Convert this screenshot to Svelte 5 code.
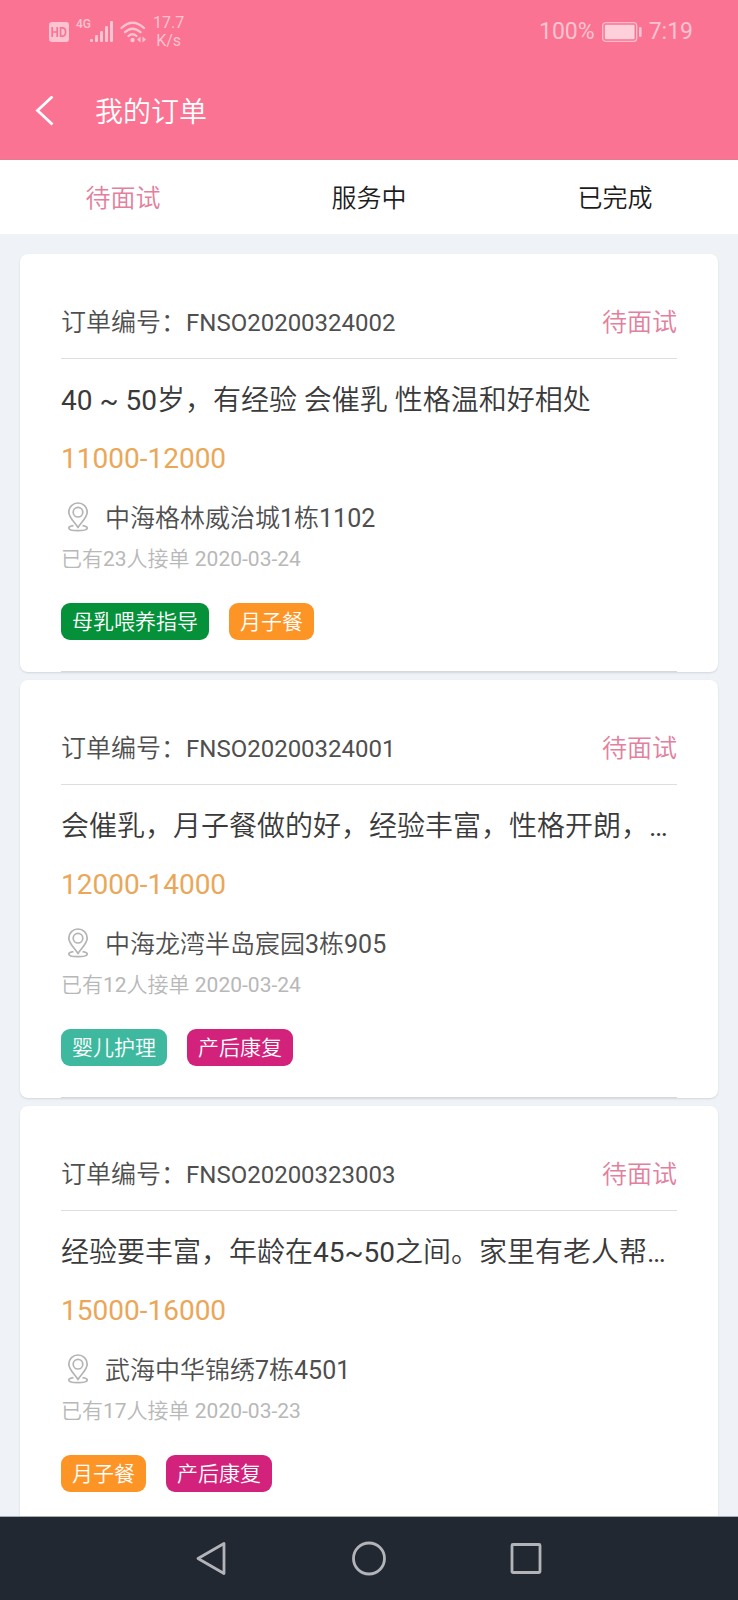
<script>
  const tabs = ['待面试', '服务中', '已完成'];
  let active = $state(0);

  const orders = [
    {
      number: 'FNSO20200324002',
      status: '待面试',
      title: '40 ~ 50岁，有经验 会催乳 性格温和好相处',
      salary: '11000-12000',
      address: '中海格林威治城1栋1102',
      meta: '已有23人接单 2020-03-24',
      tags: [
        { text: '母乳喂养指导', tone: 'green' },
        { text: '月子餐', tone: 'orange' },
      ],
    },
    {
      number: 'FNSO20200324001',
      status: '待面试',
      title: '会催乳，月子餐做的好，经验丰富，性格开朗，…',
      salary: '12000-14000',
      address: '中海龙湾半岛宸园3栋905',
      meta: '已有12人接单 2020-03-24',
      tags: [
        { text: '婴儿护理', tone: 'teal' },
        { text: '产后康复', tone: 'magenta' },
      ],
    },
    {
      number: 'FNSO20200323003',
      status: '待面试',
      title: '经验要丰富，年龄在45~50之间。家里有老人帮…',
      salary: '15000-16000',
      address: '武海中华锦绣7栋4501',
      meta: '已有17人接单 2020-03-23',
      tags: [
        { text: '月子餐', tone: 'orange' },
        { text: '产后康复', tone: 'magenta' },
      ],
    },
  ];
</script>

<div class="app">
  <header>
    <div class="status-bar">
      <div class="status-left">
        <svg class="hd" width="20" height="20" viewBox="0 0 20 20" aria-hidden="true">
          <rect width="20" height="20" rx="3" fill="#fdc3d0" />
          <path d="M3.2 5v10M8.2 5v10M3.2 10h5M11.6 5.8v8.4h1.6q3.4 0 3.4-4.2t-3.4-4.2z" fill="none" stroke="#fb7392" stroke-width="1.7" />
        </svg>
        <span class="network">4G</span>
        <svg class="signal" width="23" height="22" viewBox="0 0 23 22" fill="#fdc3d0" aria-hidden="true">
          <rect x="0" y="18" width="3" height="3" rx="1" />
          <rect x="5" y="14" width="3" height="7" rx="1" />
          <rect x="10" y="10" width="3" height="11" rx="1" />
          <rect x="15" y="5" width="3" height="16" rx="1" />
          <rect x="20" y="0" width="3" height="21" rx="1" />
        </svg>
        <svg class="wifi" width="26" height="22" viewBox="0 0 26 22" fill="none" stroke="#fdc3d0" stroke-width="2.3" stroke-linecap="round" aria-hidden="true">
          <path d="M1.5 7Q12.500 -3.500 24 7M5 11.200Q12.500 4.200 20.500 11.200M8.500 15Q12.500 11.400 16.500 15" />
          <circle cx="12.500" cy="19" r="2.200" fill="#fdc3d0" stroke="none" />
          <path d="M17 18.500l3.500-3v6zM26 18.500l-3.500-3v6z" fill="#fdc3d0" stroke="none" />
        </svg>
        <span class="speed">17.7<br />K/s</span>
      </div>
      <div class="status-right">
        <span>100%</span>
        <svg width="40" height="20" viewBox="0 0 40 20" aria-hidden="true">
          <rect x="0.700" y="0.700" width="34" height="18.600" rx="3" fill="none" stroke="#fdbccb" stroke-width="1.300" />
          <rect x="2.800" y="2.800" width="29.800" height="14.400" rx="1" fill="#fdd0da" />
          <rect x="37" y="5" width="2.600" height="10" rx="1" fill="#fdc3d0" />
        </svg>
        <span>7:19</span>
      </div>
    </div>
    <div class="title-bar">
      <button class="back" aria-label="返回">
        <svg width="20" height="32" viewBox="0 0 20 32" fill="none" stroke="#fff" stroke-width="2.800" aria-hidden="true">
          <path d="M17.500 0.500L2.500 14.500L17.500 28.500" />
        </svg>
      </button>
      <h1>我的订单</h1>
    </div>
  </header>

  <nav class="tabs">
    {#each tabs as tab, i}
      <button class:active={active === i} onclick={() => (active = i)}>{tab}</button>
    {/each}
  </nav>

  <main>
    {#each orders as order}
      <article>
        <div class="order-row">
          <span>订单编号：<span class="number">{order.number}</span></span>
          <span class="state">{order.status}</span>
        </div>
        <h2>{order.title}</h2>
        <p class="salary">{order.salary}</p>
        <p class="address">
          <svg width="22" height="34" viewBox="0 0 22 34" fill="none" stroke="#b4b4b4" stroke-width="1.700" stroke-linejoin="round" aria-hidden="true">
            <path d="M11 25.500C8 20.500 1.800 15.500 1.800 10.200a9.200 9.200 0 0 1 18.400 0C20.200 15.500 14 20.500 11 25.500z" />
            <circle cx="11" cy="10.200" r="4.800" />
            <path d="M6.500 23.600C3.600 24 1.800 24.800 1.800 26c0 1.700 4 2.700 9.200 2.700s9.200-1 9.200-2.700c0-1.200-1.800-2-4.700-2.400" />
          </svg>
          <span>{order.address}</span>
        </p>
        <p class="meta">{order.meta}</p>
        <div class="tags">
          {#each order.tags as tag}
            <span class="tag {tag.tone}">{tag.text}</span>
          {/each}
        </div>
      </article>
    {/each}
  </main>

  <footer>
    <button aria-label="后退">
      <svg width="34" height="36" viewBox="0 0 34 36" aria-hidden="true">
        <path d="M29 2.500v30L3 17.500z" />
      </svg>
    </button>
    <button aria-label="主屏幕">
      <svg width="34" height="36" viewBox="0 0 34 36" aria-hidden="true">
        <circle cx="17" cy="17.500" r="15.500" />
      </svg>
    </button>
    <button aria-label="最近任务">
      <svg width="34" height="36" viewBox="0 0 34 36" aria-hidden="true">
        <rect x="3" y="3.500" width="28" height="28" rx="1" />
      </svg>
    </button>
  </footer>
</div>

<style>
  :global(body) {
    margin: 0;
    background: #eff3f7;
  }

  .app {
    display: flex;
    flex-direction: column;
    height: 100vh;
    background: #eff3f7;
    color: #4f4f4f;
    font-family: Roboto, 'Noto Sans CJK SC DemiLight', 'Noto Sans CJK SC Light', 'Noto Sans CJK SC', sans-serif;
    font-size: 25px;
  }

  h1,
  h2,
  p {
    margin: 0;
    font-weight: 400;
  }

  button {
    padding: 0;
    border: 0;
    background: none;
    color: inherit;
    font: inherit;
    cursor: pointer;
  }

  svg {
    display: block;
    flex: none;
  }

  header {
    flex: none;
    background: #fb7392;
    box-shadow: inset 0 -1px #e57a93;
    color: #fff;
  }

  .status-bar {
    display: flex;
    justify-content: space-between;
    align-items: center;
    height: 63px;
    padding: 0 45px 0 49px;
    color: #fdc3d0;
  }

  .status-left,
  .status-right {
    display: flex;
    align-items: center;
    gap: 7px;
    font-size: 23px;
  }

  .network {
    align-self: flex-start;
    padding-top: 4px;
    font-size: 12px;
    font-weight: 500;
    line-height: 12px;
  }

  .signal {
    margin-left: -8px;
  }

  .speed {
    font-size: 16px;
    line-height: 18px;
    text-align: center;
  }

  .title-bar {
    display: flex;
    align-items: center;
    gap: 40px;
    height: 97px;
    padding-left: 35px;
  }

  h1 {
    padding-top: 2px;
    font-size: 28px;
    line-height: 40px;
  }

  .tabs {
    display: flex;
    flex: none;
    height: 74px;
    background: #fff;
    color: #1c1c1c;
  }

  .tabs button {
    flex: 1;
    padding-top: 3px;
    line-height: 36px;
  }

  .tabs .active,
  .state {
    color: #e2809d;
  }

  main {
    display: flex;
    flex: 1;
    flex-direction: column;
    gap: 8px;
    min-height: 0;
    padding: 20px 20px 0;
    overflow-y: auto;
    scrollbar-width: none;
  }

  article {
    flex: none;
    padding: 51px 41px 0;
    border-radius: 8px;
    background: #fff;
    box-shadow: 0 1px 2px rgba(60, 70, 80, 0.16);
  }

  .order-row {
    display: flex;
    justify-content: space-between;
    padding-bottom: 17px;
    border-bottom: 1px solid #dedede;
    line-height: 36px;
  }

  .number {
    font-size: 24px;
  }

  h2 {
    margin-top: 22px;
    overflow: hidden;
    color: #3a3a3a;
    font-size: 28px;
    line-height: 40px;
    text-overflow: ellipsis;
    white-space: nowrap;
  }

  .salary {
    margin-top: 18px;
    color: #eba758;
    font-size: 28px;
    line-height: 40px;
  }

  .address {
    display: flex;
    align-items: center;
    gap: 16px;
    margin-top: 20px;
    padding-left: 6px;
    line-height: 40px;
  }

  .meta {
    margin-top: 5px;
    color: #b8b8b8;
    font-size: 21px;
    line-height: 30px;
  }

  .tags {
    display: flex;
    gap: 20px;
    margin-top: 29px;
    padding-bottom: 31px;
    border-bottom: 1px solid #d6d8da;
  }

  .tag {
    padding: 1px 11px 0;
    border-radius: 9px;
    color: #fff;
    font-size: 21px;
    line-height: 36px;
  }

  .green {
    background: #04913a;
  }

  .orange {
    background: #fd9426;
  }

  .teal {
    background: #3eb9a0;
  }

  .magenta {
    background: #d2227c;
  }

  footer {
    display: flex;
    flex: none;
    justify-content: center;
    height: 83px;
    border-top: 1px solid #a9acb1;
    background: #222831;
  }

  footer button {
    display: grid;
    place-items: center;
    width: 157px;
  }

  footer svg {
    fill: none;
    stroke: #b2b4ba;
    stroke-width: 2.800;
    stroke-linejoin: round;
  }
</style>
